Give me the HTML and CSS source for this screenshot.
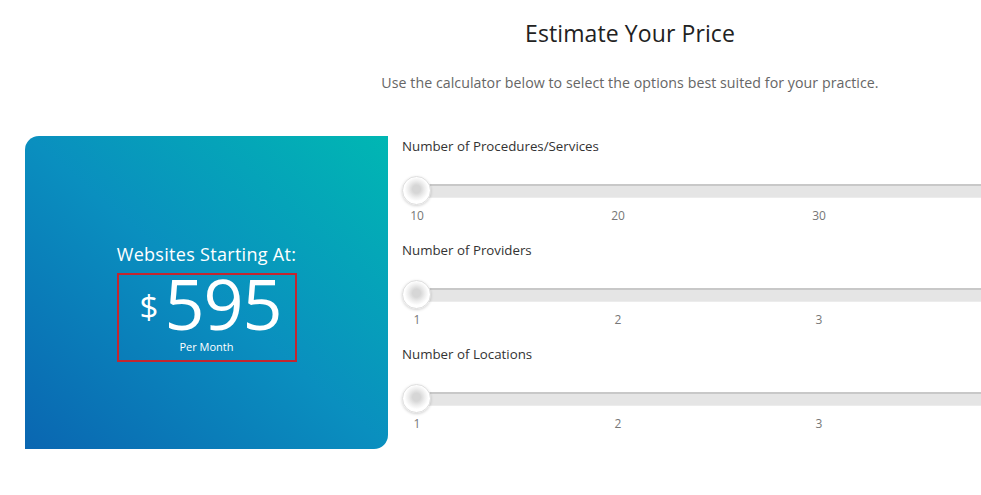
FILE: index.html
```html
<!DOCTYPE html>
<html>
<head>
<meta charset="utf-8">
<link rel="stylesheet" href="styles.css">
</head>
<body>
<header class="intro">
  <h1 class="title">Estimate Your Price</h1>
  <p class="subtitle">Use the calculator below to select the options best suited for your practice.</p>
</header>
<main class="calc">
  <section class="card">
    <h2 class="card-heading">Websites Starting At:</h2>
    <div class="price-box">
      <div class="price-row"><span class="dollar">$</span><span class="amount">595</span></div>
      <div class="per">Per Month</div>
    </div>
  </section>
  <section class="sliders">
    <div class="group">
      <div class="label">Number of Procedures/Services</div>
      <div class="slider"><div class="track"></div><div class="thumb"></div></div>
      <div class="ticks"><span>10</span><span>20</span><span>30</span></div>
    </div>
    <div class="group">
      <div class="label">Number of Providers</div>
      <div class="slider"><div class="track"></div><div class="thumb"></div></div>
      <div class="ticks"><span>1</span><span>2</span><span>3</span></div>
    </div>
    <div class="group">
      <div class="label">Number of Locations</div>
      <div class="slider"><div class="track"></div><div class="thumb"></div></div>
      <div class="ticks"><span>1</span><span>2</span><span>3</span></div>
    </div>
  </section>
</main>
</body>
</html>
```
FILE: styles.css
```css
html, body {
  margin: 0;
  padding: 0;
  background: #fff;
  overflow: hidden;
}
body {
  font-family: "Open Sans", "Liberation Sans", sans-serif;
  width: 981px;
  height: 495px;
}
.intro {
  padding: 18px 0 0 279px;
  text-align: center;
}
.title {
  margin: 0;
  font-size: 23px;
  line-height: 30px;
  font-weight: 400;
  color: #222;
  letter-spacing: 0.1px;
}
.subtitle {
  margin: 25px 0 0;
  font-size: 14.2px;
  line-height: 20px;
  color: #666;
  letter-spacing: 0.05px;
}
.calc {
  display: flex;
  margin-top: 43px;
  padding-left: 25px;
}
.card {
  width: 363px;
  height: 313px;
  box-sizing: border-box;
  padding-top: 20px;
  border-radius: 14px 0 14px 0;
  background: linear-gradient(to top right, #0a66b1 0%, #0a8fbf 50%, #00b7b3 100%);
  display: flex;
  flex-direction: column;
  align-items: center;
  justify-content: center;
  color: #fff;
  flex-shrink: 0;
}
.card-heading {
  margin: 0;
  font-size: 18px;
  line-height: 22px;
  font-weight: 500;
  letter-spacing: 0.3px;
}
.price-box {
  margin-top: 8px;
  width: 180px;
  height: 89px;
  box-sizing: border-box;
  border: 2px solid #c3262f;
  display: flex;
  flex-direction: column;
  align-items: center;
  padding-left: 8px;
}
.price-row {
  display: flex;
  align-items: center;
  height: 56px;
}
.dollar {
  font-size: 33px;
  line-height: 40px;
  margin-top: 8px;
  margin-right: 6px;
}
.amount {
  font-size: 70px;
  line-height: 56px;
  letter-spacing: -1px;
}
.per {
  margin-top: 9px;
  font-size: 11px;
  line-height: 14px;
  padding-right: 8px;
}
.sliders {
  margin-left: 14px;
  display: flex;
  flex-direction: column;
  gap: 16px;
  flex: 1;
}
.label {
  font-size: 13.3px;
  line-height: 20px;
  color: #333;
}
.slider {
  position: relative;
  margin-top: 20px;
  height: 30px;
}
.track {
  position: absolute;
  left: 12px;
  right: 0;
  top: 8px;
  height: 14px;
  box-sizing: border-box;
  background: #e5e5e5;
  border-top: 2px solid #c8c8c8;
  border-bottom: 1px solid #ececec;
}
.thumb {
  position: absolute;
  left: 0;
  top: 0;
  width: 29px;
  height: 29px;
  box-sizing: border-box;
  border-radius: 50%;
  background: radial-gradient(circle at 50% 45%, #d6d6d6 0 4px, #ececec 8px, #fff 12px);
  border: 1px solid #ddd;
  box-shadow: 0 1px 3px rgba(0,0,0,0.18);
}
.ticks {
  display: flex;
  gap: 171px;
  margin-top: 2px;
  font-size: 12px;
  line-height: 16px;
  color: #777;
}
.ticks span {
  width: 30px;
  text-align: center;
}
```
